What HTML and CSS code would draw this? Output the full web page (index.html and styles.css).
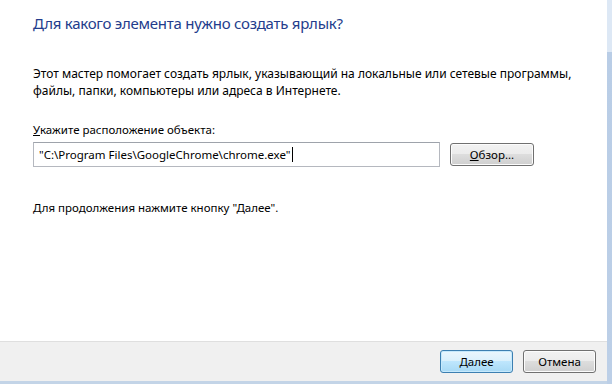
FILE: index.html
```html
<!DOCTYPE html>
<html lang="ru">
<head>
  <meta charset="UTF-8">
  <title>Создать ярлык</title>
  <link rel="stylesheet" href="styles.css">
</head>
<body>
  <div class="window">
    <div class="dialog">
      <div class="page">
        <h1 class="title">Для какого элемента нужно создать ярлык?</h1>
        <p class="intro">Этот мастер помогает создать ярлык, указывающий на локальные или сетевые программы,<br>файлы, папки, компьютеры или адреса в Интернете.</p>
        <label class="label" for="target"><u>У</u>кажите расположение объекта:</label>
        <div class="row">
          <div class="input" id="target">"C:\Program Files\GoogleChrome\chrome.exe"<span class="caret"></span></div>
          <button class="btn browse"><u>О</u>бзор...</button>
        </div>
        <p class="hint">Для продолжения нажмите кнопку "Далее".</p>
      </div>
      <div class="footer">
        <button class="btn default"><u>Д</u>алее</button>
        <button class="btn">Отмена</button>
      </div>
      <div class="strip"></div>
    </div>
    <div class="edge"></div>
  </div>
</body>
</html>
```

FILE: styles.css
```css
*{
  margin: 0;
  padding: 0;
  box-sizing: border-box;
}
body{
  background: #fff;
  font-family: 'Noto Sans', 'Open Sans', sans-serif;
  color: #000;
  overflow: hidden;
}
.window{
  display: flex;
  width: 612px;
  height: 384px;
}
.dialog{
  flex: 1;
  display: flex;
  flex-direction: column;
}
.edge{
  width: 5px;
  background: linear-gradient(#dde8f5 0, #dde8f5 52px, #b9cde6 52px, #bccfe7 100%);
}
.page{
  flex: 1;
  padding: 13px 0 0 33px;
}
.title{
  font-size: 15px;
  font-weight: normal;
  color: #233c8c;
  line-height: 21px;
  letter-spacing: -0.25px;
}
.intro{
  font-size: 12px;
  line-height: 17px;
  margin-top: 31px;
}
.label{
  display: block;
  font-size: 11.5px;
  line-height: 17px;
  margin-top: 22px;
}
.row{
  display: flex;
  align-items: center;
  margin-top: 4px;
}
.input{
  width: 407px;
  height: 25px;
  border: 1px solid #b5b8bf;
  border-top-color: #9ea3ab;
  padding: 0 5px;
  font-size: 11.5px;
  line-height: 23px;
  white-space: nowrap;
}
.caret{
  display: inline-block;
  width: 1px;
  height: 15px;
  background: #000;
  vertical-align: -3px;
  margin-left: 1px;
}
.btn{
  height: 23px;
  border: 1px solid #707070;
  border-radius: 3px;
  background: linear-gradient(#f2f2f2 0, #ebebeb 50%, #dddddd 50%, #cfcfcf 100%);
  box-shadow: inset 0 0 0 1px #fcfcfc;
  font-family: inherit;
  font-size: 11.5px;
  color: #000;
  width: 73px;
}
.browse{
  width: 84px;
  margin-left: 10px;
}
.hint{
  font-size: 11.5px;
  line-height: 17px;
  margin-top: 32px;
}
.footer{
  height: 40px;
  border-top: 1px solid #dfdfdf;
  background: #f0f0f0;
  display: flex;
  justify-content: flex-end;
  align-items: center;
  gap: 10px;
  padding: 0 11px 1px 0;
}
.default{
  border-color: #3c7fb1;
  background: linear-gradient(#eaf6fd 0, #d9f0fc 50%, #bee6fd 50%, #a7d9f5 100%);
  box-shadow: inset 0 0 0 1px #c6e9fc;
}
.strip{
  height: 3px;
  background: #c3d4e7;
}
```
